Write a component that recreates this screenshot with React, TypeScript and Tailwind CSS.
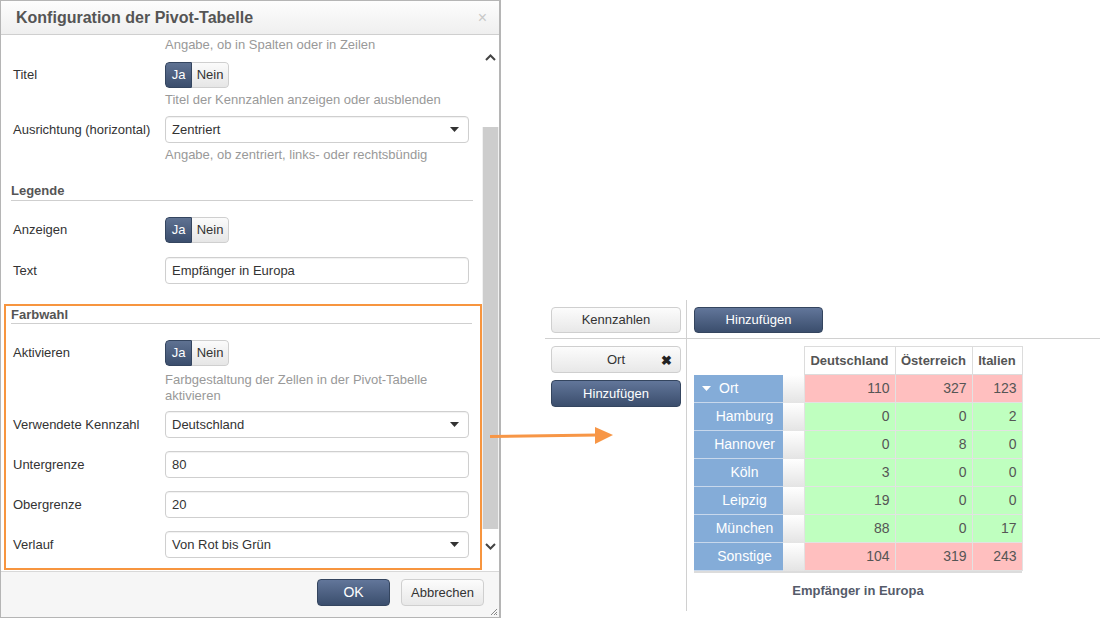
import React from "react"

const font = { fontFamily: '"Liberation Sans", Arial, sans-serif' }

function Toggle() {
  return (
    <div className="flex h-[26px] w-[64px] overflow-hidden rounded-[4px] text-[13px]">
      <div className="flex w-[27px] items-center justify-center border border-[#34455f] bg-gradient-to-b from-[#5f7292] to-[#3b4e6d] text-white rounded-l-[4px]">
        Ja
      </div>
      <div className="flex flex-1 items-center justify-center rounded-r-[4px] border border-l-0 border-[#cfcfcf] bg-gradient-to-b from-[#fbfbfb] to-[#e6e6e6] text-[#333]">
        Nein
      </div>
    </div>
  )
}

function Select({ value }: { value: string }) {
  return (
    <div className="flex h-[27px] w-[304px] items-center justify-between rounded-[4px] border border-[#cfcfcf] bg-white pl-[6px] pr-[9px] text-[13px] text-[#333] shadow-[inset_0_1px_1px_rgba(0,0,0,0.06)]">
      <span>{value}</span>
      <svg width="9" height="5" viewBox="0 0 9 5">
        <path d="M0 0h9L4.5 5z" fill="#333" />
      </svg>
    </div>
  )
}

function Input({ value }: { value: string }) {
  return (
    <div className="flex h-[27px] w-[304px] items-center rounded-[4px] border border-[#cfcfcf] bg-white pl-[6px] text-[13px] text-[#333] shadow-[inset_0_1px_1px_rgba(0,0,0,0.06)]">
      {value}
    </div>
  )
}

function Row({ label, children, className = "" }: { label: string; children: React.ReactNode; className?: string }) {
  return (
    <div className={`flex items-center ${className}`}>
      <div className="w-[152px] text-[13px] text-[#333]">{label}</div>
      {children}
    </div>
  )
}

function Hint({ children, className = "" }: { children: React.ReactNode; className?: string }) {
  return <div className={`pl-[152px] text-[13px] leading-[16px] text-[#999] ${className}`}>{children}</div>
}

function Heading({ children, className = "" }: { children: React.ReactNode; className?: string }) {
  return (
    <div className={`border-b border-[#cfcfcf] text-[13px] font-bold leading-[16px] text-[#555] ${className}`}>
      {children}
    </div>
  )
}

function DarkButton({ children, className = "" }: { children: React.ReactNode; className?: string }) {
  return (
    <div
      className={`flex items-center justify-center rounded-[4px] border border-[#34455f] bg-gradient-to-b from-[#62769a] to-[#3b4e6d] text-[13px] text-white ${className}`}
    >
      {children}
    </div>
  )
}

function LightButton({ children, className = "" }: { children: React.ReactNode; className?: string }) {
  return (
    <div
      className={`flex items-center justify-center rounded-[4px] border border-[#cfcfcf] bg-gradient-to-b from-[#fcfcfc] to-[#e8e8e8] text-[13px] text-[#333] ${className}`}
    >
      {children}
    </div>
  )
}

const rows: { name: string; vals: number[]; hot: boolean; first?: boolean }[] = [
  { name: "Ort", vals: [110, 327, 123], hot: true, first: true },
  { name: "Hamburg", vals: [0, 0, 2], hot: false },
  { name: "Hannover", vals: [0, 8, 0], hot: false },
  { name: "Köln", vals: [3, 0, 0], hot: false },
  { name: "Leipzig", vals: [19, 0, 0], hot: false },
  { name: "München", vals: [88, 0, 17], hot: false },
  { name: "Sonstige", vals: [104, 319, 243], hot: true },
]

export default function App() {
  return (
    <div className="relative flex h-[640px] w-[1119px] items-start bg-white" style={font}>
      {/* Dialog */}
      <div className="flex h-[618px] w-[501px] flex-col border border-r-2 border-[#b5b5b5] bg-white">
        <div className="flex h-[34px] shrink-0 items-center justify-between border-b border-[#cfcfcf] bg-gradient-to-b from-[#fdfdfd] to-[#efefef] pl-[15px] pr-[12px]">
          <span className="text-[16px] font-bold text-[#555]">Konfiguration der Pivot-Tabelle</span>
          <span className="text-[16px] text-[#c8c8c8]">×</span>
        </div>

        <div className="flex h-[536px] shrink-0">
          <div className="w-[481px] overflow-hidden pt-[2px]">
            <div className="px-[12px]">
              <Hint>Angabe, ob in Spalten oder in Zeilen</Hint>
              <Row label="Titel" className="mt-[9px]">
                <Toggle />
              </Row>
              <Hint className="mt-[4px]">Titel der Kennzahlen anzeigen oder ausblenden</Hint>
              <Row label="Ausrichtung (horizontal)" className="mt-[8px]">
                <Select value="Zentriert" />
              </Row>
              <Hint className="mt-[4px]">Angabe, ob zentriert, links- oder rechtsbündig</Hint>
            </div>
            <Heading className="ml-[10px] mr-[9px] mt-[20px] pb-[1px]">Legende</Heading>
            <div className="px-[12px]">
              <Row label="Anzeigen" className="mt-[16px]">
                <Toggle />
              </Row>
              <Row label="Text" className="mt-[14px]">
                <Input value="Empfänger in Europa" />
              </Row>
            </div>

            <div className="ml-[3px] mt-[20px] w-[478px] border-2 border-[#f7953f] pb-[10px]">
              <Heading className="ml-[5px] mr-[8px] pt-[1px]">Farbwahl</Heading>
              <div className="pl-[7px]">
                <Row label="Aktivieren" className="mt-[16px]">
                  <Toggle />
                </Row>
                <Hint className="mt-[6px]">
                  Farbgestaltung der Zellen in der Pivot-Tabelle
                  <br />
                  aktivieren
                </Hint>
                <Row label="Verwendete Kennzahl" className="mt-[7px]">
                  <Select value="Deutschland" />
                </Row>
                <Row label="Untergrenze" className="mt-[13px]">
                  <Input value="80" />
                </Row>
                <Row label="Obergrenze" className="mt-[13px]">
                  <Input value="20" />
                </Row>
                <Row label="Verlauf" className="mt-[13px]">
                  <Select value="Von Rot bis Grün" />
                </Row>
              </div>
            </div>
          </div>

          {/* Scrollbar */}
          <div className="flex w-[17px] flex-col bg-[#f1f1f1]">
            <div className="flex h-[40px] items-center justify-center bg-white pt-[4px]">
              <svg width="11" height="7" viewBox="0 0 11 7">
                <path d="M1 6l4.5-4.5L10 6" stroke="#444" strokeWidth="2" fill="none" />
              </svg>
            </div>
            <div className="h-[52px] bg-white" />
            <div className="mx-[1px] h-[402px] bg-[#cdcdcd]" />
            <div className="flex flex-1 items-center justify-center bg-white pb-[8px]">
              <svg width="11" height="7" viewBox="0 0 11 7">
                <path d="M1 1l4.5 4.5L10 1" stroke="#444" strokeWidth="2" fill="none" />
              </svg>
            </div>
          </div>
        </div>

        <div className="relative flex flex-1 items-start justify-end gap-[11px] border-t border-[#d8d8d8] bg-[#f6f6f6] pr-[15px] pt-[7px]">
          <DarkButton className="h-[27px] w-[73px] text-[14px]">OK</DarkButton>
          <LightButton className="h-[27px] w-[83px]">Abbrechen</LightButton>
          <svg className="absolute bottom-[1px] right-[1px]" width="8" height="8" viewBox="0 0 8 8">
            <path d="M7 1L1 7M7 4L4 7M7 6L6 7" stroke="#888" strokeWidth="1" />
          </svg>
        </div>
      </div>

      {/* Arrow annotation */}
      <svg className="absolute left-[488px] top-[425px]" width="128" height="22" viewBox="0 0 128 22">
        <path d="M2 11.5L110 10" stroke="#f79646" strokeWidth="3" />
        <path d="M107 2L125 10L107 19z" fill="#f79646" />
      </svg>

      {/* Pivot editor */}
      <div className="ml-[44px] mt-[300px] flex w-[555px] flex-col">
        <div className="flex h-[39px] border-b border-[#d0d0d0]">
          <div className="w-[142px] border-r border-[#d0d0d0] pl-[6px] pt-[7px]">
            <LightButton className="h-[26px] w-[130px]">Kennzahlen</LightButton>
          </div>
          <div className="pl-[7px] pt-[7px]">
            <DarkButton className="h-[26px] w-[129px]">Hinzufügen</DarkButton>
          </div>
        </div>
        <div className="flex h-[272px]">
          <div className="flex w-[142px] flex-col gap-[7px] border-r border-[#d0d0d0] pl-[6px] pt-[7px]">
            <LightButton className="relative h-[27px] w-[130px]">
              Ort
              <span className="absolute right-[8px] top-[4px] text-[13px] font-bold text-[#222]">✖</span>
            </LightButton>
            <DarkButton className="h-[27px] w-[130px]">Hinzufügen</DarkButton>
          </div>
          <div className="pl-[7px] pt-[7px]">
            <table className="border-collapse text-[13px]">
              <thead>
                <tr className="h-[28px]">
                  <th className="w-[89px] p-0" />
                  <th className="w-[21px] p-0" />
                  <th className="w-[91px] border border-[#dcdcdc] p-0 font-bold text-[#555]">Deutschland</th>
                  <th className="w-[77px] border border-[#dcdcdc] p-0 font-bold text-[#555]">Österreich</th>
                  <th className="w-[50px] border border-[#dcdcdc] p-0 font-bold text-[#555]">Italien</th>
                </tr>
              </thead>
              <tbody>
                {rows.map((r) => (
                  <tr key={r.name} className="h-[28px]">
                    <td
                      className={`border-b border-[#c8d8ec] bg-[#84acd8] p-0 text-[14px] text-white ${r.first ? "pl-[8px] text-left" : "pl-[12px] text-center"}`}
                    >
                      {r.first ? (
                        <span className="flex items-center gap-[8px]">
                          <svg width="9" height="5" viewBox="0 0 9 5">
                            <path d="M0 0h9L4.5 5z" fill="#fff" />
                          </svg>
                          {r.name}
                        </span>
                      ) : (
                        r.name
                      )}
                    </td>
                    <td className="bg-gradient-to-b from-white to-[#e4e4e4] p-0" />
                    {r.vals.map((v, i) => (
                      <td
                        key={i}
                        className={`border border-[#e2e2e2] p-0 pr-[5px] text-right text-[14px] text-[#555] ${r.hot ? "bg-[#ffbfbf]" : "bg-[#bfffbf]"}`}
                      >
                        {v}
                      </td>
                    ))}
                  </tr>
                ))}
              </tbody>
            </table>
            <div className="h-[2px] w-[328px] bg-[#dcdcdc]" />
            <div className="mt-[8px] w-[328px] text-center text-[13px] font-bold text-[#555b6a]">
              Empfänger in Europa
            </div>
          </div>
        </div>
      </div>
    </div>
  )
}
